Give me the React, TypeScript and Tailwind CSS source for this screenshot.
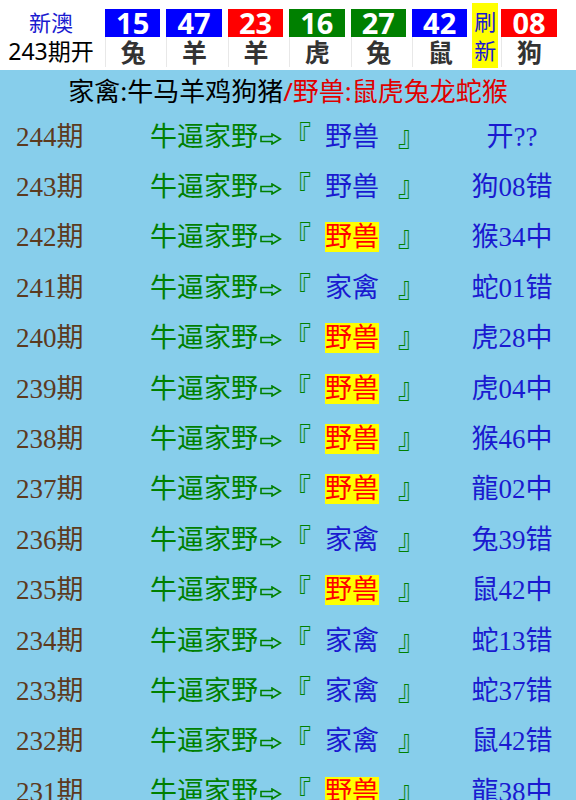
const balls = [
  { n: "15", z: "兔", c: "bg-[#0000ff]" },
  { n: "47", z: "羊", c: "bg-[#0000ff]" },
  { n: "23", z: "羊", c: "bg-[#ff0000]" },
  { n: "16", z: "虎", c: "bg-[#008000]" },
  { n: "27", z: "兔", c: "bg-[#008000]" },
  { n: "42", z: "鼠", c: "bg-[#0000ff]" },
];

const rows = [
  { q: "244", t: "野兽", hit: false, r: "开??" },
  { q: "243", t: "野兽", hit: false, r: "狗08错" },
  { q: "242", t: "野兽", hit: true, r: "猴34中" },
  { q: "241", t: "家禽", hit: false, r: "蛇01错" },
  { q: "240", t: "野兽", hit: true, r: "虎28中" },
  { q: "239", t: "野兽", hit: true, r: "虎04中" },
  { q: "238", t: "野兽", hit: true, r: "猴46中" },
  { q: "237", t: "野兽", hit: true, r: "龍02中" },
  { q: "236", t: "家禽", hit: false, r: "兔39错" },
  { q: "235", t: "野兽", hit: true, r: "鼠42中" },
  { q: "234", t: "家禽", hit: false, r: "蛇13错" },
  { q: "233", t: "家禽", hit: false, r: "蛇37错" },
  { q: "232", t: "家禽", hit: false, r: "鼠42错" },
  { q: "231", t: "野兽", hit: true, r: "龍38中" },
];

const sans = "font-['Noto_Sans','Noto_Sans_CJK_SC',sans-serif]";
const serif = "font-['Liberation_Serif','Noto_Sans_CJK_SC',serif]";

function Ball({ n, z, c }: { n: string; z: string; c: string }) {
  return (
    <div className="flex w-[61.4px] flex-col px-[3px]">
      <div className={`${c} mt-[9px] flex h-[28px] items-center justify-center text-[29px] font-bold leading-[28px] text-white`}>
        {n}
      </div>
      <div className="flex h-[30px] items-center justify-center border-l border-[#e8e8e8] text-[25px] font-bold leading-[30px] text-[#333]">
        {z}
      </div>
    </div>
  );
}

function Arrow() {
  return (
    <svg width="22" height="12" viewBox="0 0 22 12" className="mt-[3px]">
      <path d="M1 3.5 H12 V1 L20.5 6 L12 11 V8.5 H1 Z" fill="none" stroke="#008000" strokeWidth="1.6" strokeLinejoin="miter" />
    </svg>
  );
}

export default function App() {
  return (
    <div className={`h-[800px] w-[576px] overflow-hidden bg-[#87ceeb] ${sans}`}>
      <div className="flex h-[70px] bg-white">
        <div className="flex w-[102px] flex-col items-center pt-[7px]">
          <div className="text-[22px] leading-[30px] text-[#1a1ad0]">新澳</div>
          <div className="text-[23px] leading-[28px] text-black">243期开</div>
        </div>
        {balls.map((b, i) => (
          <Ball key={i} {...b} />
        ))}
        <div className="ml-[2px] mt-[3px] flex h-[65px] w-[26px] flex-col items-center justify-center bg-[#ffff00] text-[22px] leading-[29px] text-[#1a1ad0]">
          <span>刷</span>
          <span>新</span>
        </div>
        <Ball n="08" z="狗" c="bg-[#ff0000]" />
      </div>

      <div className="flex h-[42px] items-center justify-center text-[26px] leading-none">
        <span className="text-black">家禽:牛马羊鸡狗猪</span>
        <span className="text-[#e00000]">/野兽:鼠虎兔龙蛇猴</span>
      </div>

      <div className={`flex flex-col ${serif}`}>
        {rows.map((row) => (
          <div key={row.q} className="flex h-[50.4px] items-center text-[27px] leading-none">
            <div className="w-[150px] pl-[16px] text-[#5c3a1e]">{row.q}期</div>
            <div className="flex w-[134px] items-center text-[#008000]">
              <span className="w-[110px]">牛逼家野</span>
              <Arrow />
            </div>
            <div className="w-[41px] text-[#008000]">『</div>
            <div className="w-[73px]">
              <span className={row.hit ? "bg-[#ffff00] text-[#ff0000]" : "text-[#1a1ad0]"}>{row.t}</span>
            </div>
            <div className="w-[60px] text-[#008000]">』</div>
            <div className="flex-1 pr-[10px] text-center text-[#1a1ad0]">{row.r}</div>
          </div>
        ))}
      </div>
    </div>
  );
}
